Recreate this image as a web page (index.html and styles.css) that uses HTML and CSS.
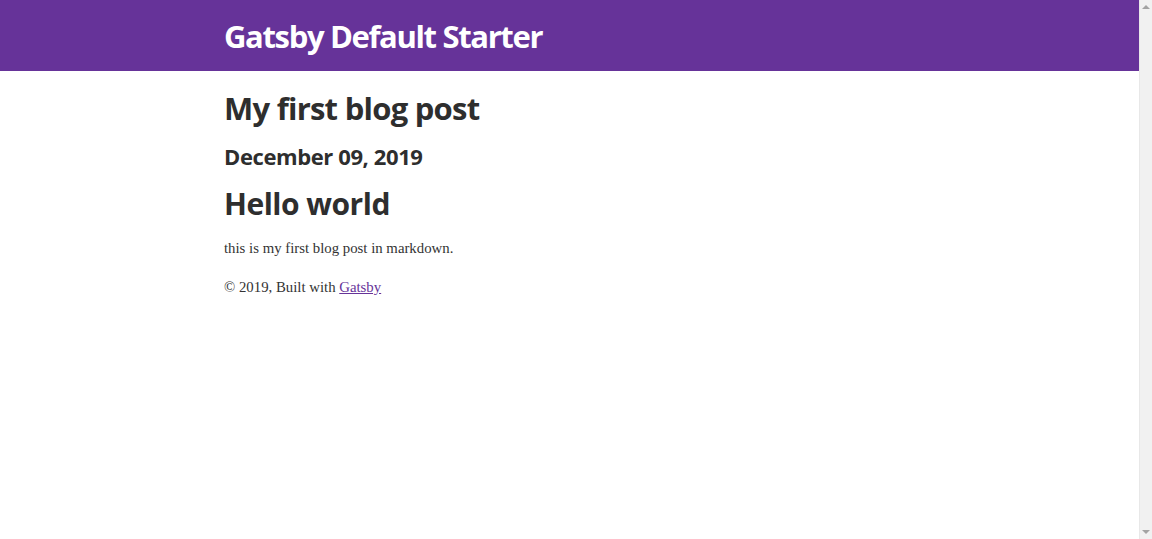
FILE: index.html
```html
<!DOCTYPE html>
<html lang="en">
<head>
<meta charset="utf-8">
<title>My first blog post | Gatsby Default Starter</title>
<link rel="stylesheet" href="styles.css">
</head>
<body>
<div class="window">
  <div class="viewport">
    <header class="site-header">
      <div class="container">
        <h1 class="site-title"><a href="/">Gatsby Default Starter</a></h1>
      </div>
    </header>
    <div class="container">
      <main>
        <h1 class="post-title">My first blog post</h1>
        <h2 class="post-date">December 09, 2019</h2>
        <div class="post-body">
          <h1 class="post-heading">Hello world</h1>
          <p class="post-text">this is my first blog post in markdown.</p>
        </div>
      </main>
      <footer class="site-footer">© 2019, Built with <a href="https://www.gatsbyjs.org">Gatsby</a></footer>
    </div>
  </div>
  <div class="scrollbar">
    <span class="arrow arrow-up"></span>
    <span class="arrow arrow-down"></span>
  </div>
</div>
</body>
</html>
```

FILE: styles.css
```css
html, body {
  margin: 0;
  padding: 0;
  background: #fff;
}

.window {
  display: flex;
  height: 539px;
  overflow: hidden;
}

.viewport {
  flex: 1;
  min-width: 0;
}

.scrollbar {
  width: 13px;
  background: #f1f1f1;
  border-left: 1px solid #e8e8e8;
  display: flex;
  flex-direction: column;
  justify-content: space-between;
  align-items: center;
  padding: 5px 0;
  box-sizing: border-box;
}

.arrow {
  width: 0;
  height: 0;
  border-left: 4px solid transparent;
  border-right: 4px solid transparent;
}

.arrow-up {
  border-bottom: 4px solid #a3a3a3;
}

.arrow-down {
  border-top: 4px solid #a3a3a3;
}

.container {
  padding: 0 224px;
}

.site-header {
  background: #663399;
  height: 71px;
  display: flex;
  align-items: center;
  margin-bottom: 20px;
}

.site-title {
  margin: 0;
  font-family: "Open Sans", "Noto Sans", sans-serif;
  font-weight: 700;
  font-size: 31px;
  line-height: 1.1;
  letter-spacing: -1.35px;
  padding-top: 1px;
}

.site-title a {
  color: #fff;
  text-decoration: none;
}

.post-title,
.post-date,
.post-heading {
  font-family: "Open Sans", "Noto Sans", sans-serif;
  font-weight: 700;
  color: #2e2e2e;
  line-height: 1.1;
}

.post-title {
  font-size: 31px;
  letter-spacing: -0.75px;
  margin: 0 0 19px;
}

.post-date {
  font-size: 22px;
  letter-spacing: -0.4px;
  margin: 0 0 19px;
}

.post-heading {
  font-size: 30px;
  letter-spacing: -0.5px;
  margin: 0 0 18px;
}

.post-text,
.site-footer {
  font-family: "Liberation Serif", Georgia, serif;
  font-size: 14.8px;
  line-height: 1.45;
  color: #333;
}

.post-text {
  margin: 0 0 17px;
}

.site-footer a {
  color: #663399;
}
```
